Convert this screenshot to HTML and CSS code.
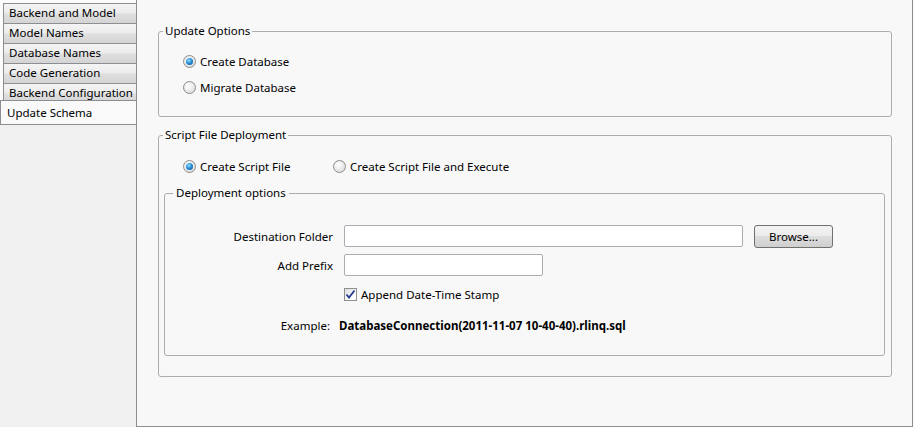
FILE: index.html
```html
<!DOCTYPE html>
<html>
<head>
<meta charset="utf-8">
<link rel="stylesheet" href="styles.css">
</head>
<body>
<div class="app">
  <nav class="sidebar">
    <div class="tabs">
      <div class="tab">Backend and Model</div>
      <div class="tab">Model Names</div>
      <div class="tab">Database Names</div>
      <div class="tab">Code Generation</div>
      <div class="tab">Backend Configuration</div>
      <div class="tab selected">Update Schema</div>
    </div>
    <div class="filler"></div>
  </nav>
  <main class="panel">
    <fieldset class="group update-options">
      <legend>Update Options</legend>
      <div class="radio-row">
        <span class="radio checked"></span><span class="opt-text">Create Database</span>
      </div>
      <div class="radio-row">
        <span class="radio"></span><span class="opt-text">Migrate Database</span>
      </div>
    </fieldset>

    <fieldset class="group script-deploy">
      <legend>Script File Deployment</legend>
      <div class="radio-row inline">
        <div class="radio-item first"><span class="radio checked"></span><span class="opt-text">Create Script File</span></div>
        <div class="radio-item"><span class="radio"></span><span class="opt-text">Create Script File and Execute</span></div>
      </div>

      <fieldset class="group deploy-options">
        <legend>Deployment options</legend>
        <div class="form-row row-dest">
          <label class="field-label">Destination Folder</label>
          <div class="textbox wide"></div>
          <div class="button">Browse...</div>
        </div>
        <div class="form-row row-prefix">
          <label class="field-label">Add Prefix</label>
          <div class="textbox narrow"></div>
        </div>
        <div class="form-row row-check">
          <span class="field-label"></span>
          <span class="checkbox"><svg width="11" height="11" viewBox="0 0 11 11"><path d="M1.5 5.5 L4 8.5 L9.5 1.5" fill="none" stroke="#24398f" stroke-width="1.8"/></svg></span>
          <span class="check-text">Append Date-Time Stamp</span>
        </div>
        <div class="example-row">
          <span class="example-label">Example:</span>
          <span class="example-value">DatabaseConnection(2011-11-07 10-40-40).rlinq.sql</span>
        </div>
      </fieldset>
    </fieldset>
  </main>
</div>
</body>
</html>
```
FILE: styles.css
```css
* { box-sizing: border-box; }

html, body {
  margin: 0;
  padding: 0;
}

body {
  width: 914px;
  height: 427px;
  font-family: "Noto Sans", "Open Sans", sans-serif;
  font-size: 11.5px;
  color: #000;
  background: #f8f8f8;
  overflow: hidden;
}

.app {
  display: flex;
  height: 427px;
}

/* ---------- sidebar ---------- */
.sidebar {
  width: 136px;
  display: flex;
  flex-direction: column;
  background: #fbfbfb;
}

.tabs {
  padding-top: 3px;
  display: flex;
  flex-direction: column;
}

.tab {
  margin-left: 3px;
  height: 20px;
  border: 1px solid #8c8e94;
  border-right: none;
  border-bottom: none;
  background: linear-gradient(#f4f4f4 0%, #ececec 45%, #dedede 55%, #d4d4d4 100%);
  padding-left: 5px;
  line-height: 18px;
  white-space: nowrap;
}

.tab.selected {
  margin-left: 0;
  margin-top: -3px;
  height: 25px;
  background: #f9f9f9;
  border: 1px solid #8c8e94;
  border-right: none;
  padding-left: 6px;
  line-height: 24px;
  position: relative;
}

.filler {
  flex: 1;
  background: #f0f0f0;
}

/* ---------- main panel ---------- */
.panel {
  flex: 1;
  margin-right: 1px;
  background: #f8f8f8;
  border: 1px solid #8c8e94;
  border-top: none;
  padding: 23px 20px 0 21px;
}

.group {
  margin: 0;
  min-width: 0;
  border: 1px solid #adadad;
  border-radius: 3px;
}

.group > legend {
  line-height: 16px;
  padding: 0 2px;
  margin-left: -1px;
}

.update-options {
  padding: 9px 5px 16px 5px;
  margin-bottom: 10px;
}

.script-deploy {
  padding: 10px 6px 20px 5px;
}

.radio-row {
  height: 26px;
  display: flex;
  align-items: center;
  padding-left: 19px;
}

.radio-item {
  display: flex;
  align-items: center;
}

.radio-item.first {
  width: 150px;
}

.radio {
  width: 13px;
  height: 13px;
  border-radius: 50%;
  border: 1px solid #8d8d8d;
  background: radial-gradient(circle at 40% 35%, #ffffff 0%, #e6e6e6 60%, #cfcfcf 100%);
  display: inline-flex;
  align-items: center;
  justify-content: center;
  flex: none;
}

.radio.checked::after {
  content: "";
  width: 7px;
  height: 7px;
  border-radius: 50%;
  background: radial-gradient(circle at 40% 35%, #8fe0ff 0%, #2b8fd6 45%, #0b4f94 100%);
}

.opt-text {
  margin-left: 4px;
  white-space: nowrap;
}

/* ---------- deployment options ---------- */
.deploy-options {
  margin-top: 6px;
  padding: 23px 0 20px 0;
}

.deploy-options > legend {
  margin-left: 8px;
  padding: 0 3px;
}

.form-row {
  display: flex;
  align-items: center;
}

.row-dest { height: 24px; }
.row-prefix { height: 22px; margin-top: 6px; }
.row-check { height: 20px; margin-top: 8px; }

.field-label {
  width: 168px;
  text-align: right;
  flex: none;
  margin-right: 11px;
  white-space: nowrap;
}

.textbox {
  height: 22px;
  background: #fff;
  border: 1px solid #abadb3;
  border-radius: 2px;
}

.textbox.wide { width: 399px; }
.textbox.narrow { width: 199px; }

.button {
  margin-left: 11px;
  width: 79px;
  height: 23px;
  border: 1px solid #707070;
  border-radius: 3px;
  background: linear-gradient(#f3f3f3 0%, #ebebeb 50%, #dddddd 50%, #cfcfcf 100%);
  display: flex;
  align-items: center;
  justify-content: center;
  white-space: nowrap;
}

.checkbox {
  width: 13px;
  height: 13px;
  border: 1px solid #8e8f8f;
  background: linear-gradient(135deg, #dcdcdc 0%, #ffffff 70%);
  display: inline-flex;
  align-items: center;
  justify-content: center;
  flex: none;
}

.check-text {
  margin-left: 4px;
  white-space: nowrap;
}

.example-row {
  display: flex;
  align-items: center;
  height: 20px;
  margin-top: 11px;
}

.example-label {
  width: 165px;
  text-align: right;
  margin-right: 9px;
  flex: none;
}

.example-value {
  font-weight: 700;
  white-space: nowrap;
}
```
